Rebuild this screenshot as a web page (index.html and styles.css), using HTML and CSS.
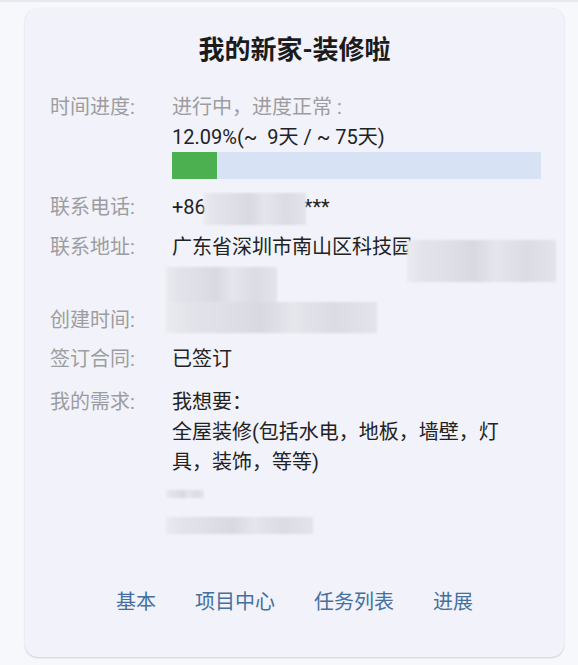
FILE: index.html
```html
<!DOCTYPE html>
<html lang="zh-CN">
<head>
<meta charset="utf-8">
<title>我的新家-装修啦</title>
<link rel="stylesheet" href="styles.css">
</head>
<body>
<div class="topline"></div>
<div class="card">
  <h1 class="title">我的新家-装修啦</h1>
  <div class="rows">
    <div class="row row-progress">
      <div class="label">时间进度:</div>
      <div class="value">
        <div class="muted">进行中，进度正常 :</div>
        <div class="pct">12.09%(~&nbsp; 9天 / ~ 75天)</div>
        <div class="bar"><div class="bar-fill" style="width:12.09%"></div></div>
      </div>
    </div>
    <div class="row row-phone">
      <div class="label">联系电话:</div>
      <div class="value masked">+86<span class="spacer"></span>***<span class="blur blur-phone"></span></div>
    </div>
    <div class="row row-addr">
      <div class="label">联系地址:</div>
      <div class="value masked">
        <div class="addr-line">广东省深圳市南山区科技园</div>
        <div class="addr-line">&nbsp;</div>
        <span class="blur blur-addr"></span>
        <span class="blur blur-addr2"></span>
      </div>
    </div>
    <div class="row row-created">
      <div class="label">创建时间:</div>
      <div class="value masked">&nbsp;<span class="blur blur-created"></span></div>
    </div>
    <div class="row row-signed">
      <div class="label">签订合同:</div>
      <div class="value">已签订</div>
    </div>
    <div class="row row-need">
      <div class="label">我的需求:</div>
      <div class="value masked">
        <div>我想要：</div>
        <div class="need-text">全屋装修(包括水电，地板，墙壁，灯具，装饰，等等)</div>
        <div class="blank-line">&nbsp;</div>
        <div class="blank-line">&nbsp;</div>
        <span class="blur blur-small"></span>
        <span class="blur blur-last"></span>
      </div>
    </div>
  </div>
  <nav class="tabs">
    <span class="tab">基本</span>
    <span class="tab">项目中心</span>
    <span class="tab">任务列表</span>
    <span class="tab">进展</span>
  </nav>
</div>
</body>
</html>
```

FILE: styles.css
```css
html, body {
  margin: 0;
  padding: 0;
}
body {
  background: #f7f8fc;
  font-family: Roboto, "Noto Sans CJK SC", sans-serif;
  color: #222;
  width: 578px;
  height: 665px;
  overflow: hidden;
}
.topline {
  height: 2px;
  background: #e7e9f2;
}
.card {
  margin: 6px 0 0 25px;
  width: 539px;
  height: 649px;
  box-sizing: border-box;
  background: #f1f2fa;
  border-radius: 13px;
  box-shadow: 0 1px 2px rgba(0, 0, 0, 0.16), 0 0 1px rgba(0, 0, 0, 0.06);
  padding: 27px 0 0 25px;
  display: flex;
  flex-direction: column;
}
.title {
  margin: 0;
  font-size: 26px;
  line-height: 30px;
  font-weight: 700;
  text-align: center;
  color: #1b1b1b;
  padding-right: 25px;
}
.rows {
  margin-top: 27px;
  display: flex;
  flex-direction: column;
}
.row {
  display: grid;
  grid-template-columns: 122px 1fr;
  font-size: 20px;
  line-height: 30px;
}
.label {
  color: #9d9d9f;
}
.value {
  color: #222;
}
.masked {
  position: relative;
}
.muted {
  color: #9d9d9f;
}
.pct {
  font-size: 20px;
}
.bar {
  width: 369px;
  height: 27px;
  background: #d7e3f5;
  display: flex;
}
.bar-fill {
  background: #4caf50;
  height: 100%;
}
.row-phone { margin-top: 13px; }
.row-addr { margin-top: 10px; }
.row-created { margin-top: 13px; }
.row-signed { margin-top: 9px; }
.row-need { margin-top: 13px; }

.spacer {
  display: inline-block;
  width: 98px;
}
.blur {
  position: absolute;
  background:
    linear-gradient(90deg,
      rgba(255,255,255,0.35) 0%,
      rgba(255,255,255,0.1) 12%,
      rgba(0,0,0,0) 24%,
      rgba(0,0,0,0.03) 45%,
      rgba(255,255,255,0.2) 60%,
      rgba(0,0,0,0.02) 80%,
      rgba(255,255,255,0.15) 100%),
    #dfe0e8;
  filter: blur(0.8px);
}
.blur-phone {
  left: 32px;
  top: 1px;
  width: 102px;
  height: 32px;
}
.blur-addr {
  left: 235px;
  top: 8px;
  width: 149px;
  height: 42px;
}
.blur-addr2 {
  left: -6px;
  top: 35px;
  width: 111px;
  height: 37px;
}
.blur-created {
  left: -6px;
  top: -3px;
  width: 211px;
  height: 31px;
}
.need-text {
  width: 340px;
}
.blur-small {
  left: -6px;
  top: 103px;
  width: 38px;
  height: 8px;
}
.blur-last {
  left: -6px;
  top: 130px;
  width: 147px;
  height: 17px;
}
.tabs {
  margin-top: auto;
  margin-bottom: 40px;
  padding-right: 25px;
  display: flex;
  justify-content: center;
  gap: 39px;
  font-size: 20px;
  line-height: 30px;
  color: #45709d;
}
.tab {
  cursor: pointer;
}
```
